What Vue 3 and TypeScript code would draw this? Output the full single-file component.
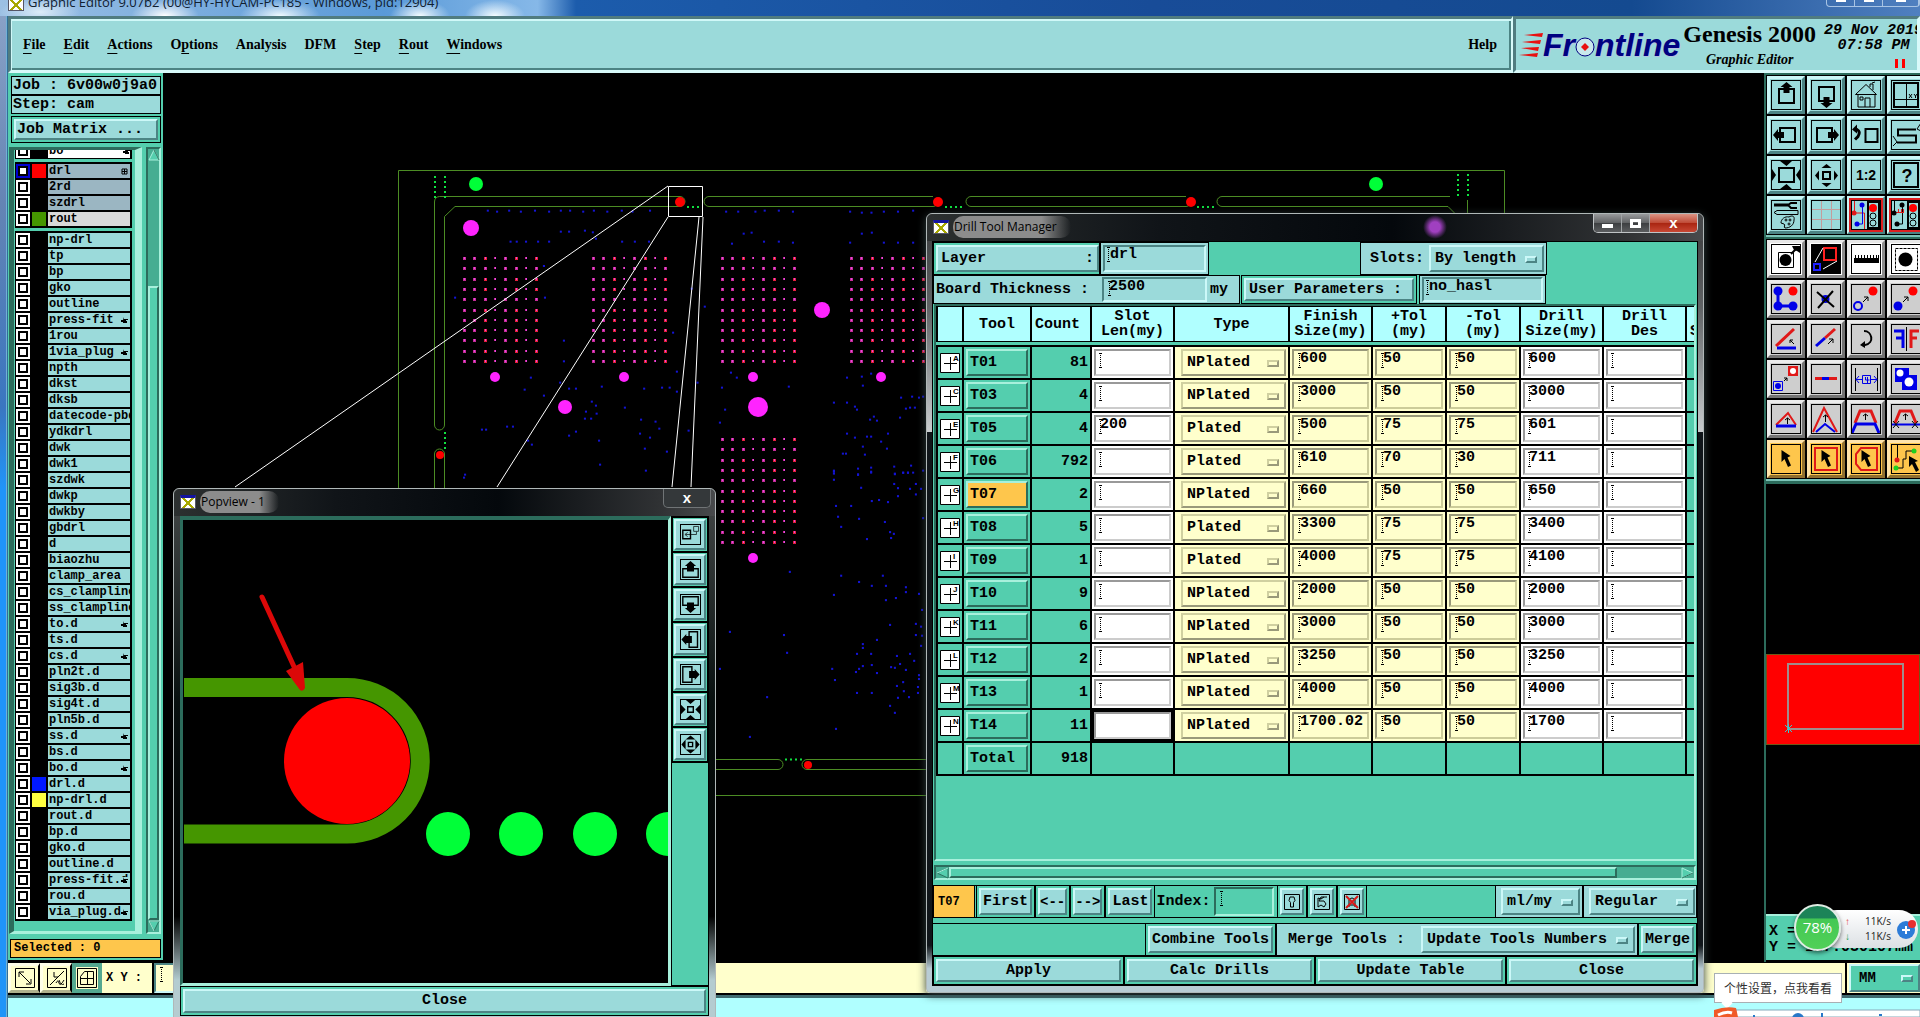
<script setup lang="ts">
import { ref } from 'vue'

interface Layer { name: string; color?: string; kind?: string; mark?: string; on?: boolean }
interface Tool { code: string; mark: string; count: number; slot: string; type: string; finish: string; plus: string; minus: string; drill: string }

const menus: { key: string; pre?: string; rest: string }[] = [
  { key: 'F', rest: 'ile' }, { key: 'E', rest: 'dit' }, { key: 'A', rest: 'ctions' },
  { pre: 'O', key: 'p', rest: 'tions' }, { key: '', rest: 'Analysis' }, { key: '', rest: 'DFM' },
  { key: 'S', rest: 'tep' }, { key: 'R', rest: 'out' }, { key: 'W', rest: 'indows' },
]

const drillLayers: Layer[] = [
  { name: 'drl', color: '#ff0000', kind: 'drill', mark: 'grid', on: true },
  { name: '2rd', kind: 'drill' },
  { name: 'szdrl', kind: 'drill' },
  { name: 'rout', color: '#459600', kind: 'rout' },
]
const handed = new Set(['press-fit', '1via_plug', 'to.d', 'cs.d', 'ss.d', 'bo.d', 'press-fit.d', 'via_plug.d'])
const swatches: Record<string, string> = { 'drl.d': '#0018ff', 'np-drl.d': '#ffff40' }
const miscLayers: Layer[] = (
  'np-drl tp bp gko outline press-fit 1rou 1via_plug npth dkst dksb datecode-pbd ydkdrl dwk dwk1 szdwk dwkp dwkby gbdrl d ' +
  'biaozhu clamp_area cs_clampline ss_clampline to.d ts.d cs.d pln2t.d sig3b.d sig4t.d pln5b.d ss.d bs.d bo.d drl.d np-drl.d ' +
  'rout.d bp.d gko.d outline.d press-fit.d rou.d via_plug.d'
).split(' ').map((name) => ({ name, color: swatches[name], mark: handed.has(name) ? 'hand' : undefined }))
const layerGroups = [drillLayers, miscLayers]

const tool = (code: string, mark: string, count: number, slot: string, type: string, finish: string, plus: string, minus: string, drill: string): Tool =>
  ({ code, mark, count, slot, type, finish, plus, minus, drill })
const tools = ref<Tool[]>([
  tool('T01', 'A', 81, '', 'NPlated', '600', '50', '50', '600'),
  tool('T03', 'C', 4, '', 'NPlated', '3000', '50', '50', '3000'),
  tool('T05', 'E', 4, '200', 'Plated', '500', '75', '75', '601'),
  tool('T06', 'F', 792, '', 'Plated', '610', '70', '30', '711'),
  tool('T07', 'G', 2, '', 'NPlated', '660', '50', '50', '650'),
  tool('T08', 'H', 5, '', 'Plated', '3300', '75', '75', '3400'),
  tool('T09', 'I', 1, '', 'Plated', '4000', '75', '75', '4100'),
  tool('T10', 'J', 9, '', 'NPlated', '2000', '50', '50', '2000'),
  tool('T11', 'K', 6, '', 'NPlated', '3000', '50', '50', '3000'),
  tool('T12', 'L', 2, '', 'NPlated', '3250', '50', '50', '3250'),
  tool('T13', 'M', 1, '', 'NPlated', '4000', '50', '50', '4000'),
  tool('T14', 'N', 11, '', 'NPlated', '1700.02', '50', '50', '1700'),
])
const current = ref('T07')
const total = 918
const columns = [28, 68, 60, 83, 115, 83, 74, 74, 83, 83, 83]

const st = (d: string, color = '#000', w = 1) => `<path d="${d}" fill="none" stroke="${color}" stroke-width="${w}"/>`
const fl = (d: string, color = '#000') => `<path d="${d}" fill="${color}"/>`
const dot = (x: number, y: number, r: number, color: string) => `<circle cx="${x}" cy="${y}" r="${r}" fill="${color}"/>`
const ring = (x: number, y: number, r: number, color: string, w = 1) => `<circle cx="${x}" cy="${y}" r="${r}" fill="none" stroke="${color}" stroke-width="${w}"/>`
const R = '#e01818'
const B = '#0000e8'
const cursor = fl('M10.500 6l9 6-3 1.500 3.500 8-3 1.500-3.500-8-3 3z')
const lights = '<rect x="17" y="2" width="11" height="26" fill="#9bdada" stroke="#000" stroke-width="2"/>' +
  dot(22, 8, 4, '#ff0000') + ring(22, 16, 3, '#000') + ring(22, 23, 3, '#000')

const viewIcons: { name: string; svg: string; cls?: string }[] = [
  { name: 'Pan up', svg: st('M8 9h15v14H8z', '#000', 2) + fl('M15.5 2l6 5h-3v6h-6V7h-3z') },
  { name: 'Pan down', svg: st('M8 7h15v14H8z', '#000', 2) + fl('M15.5 28l6-5h-3v-6h-6v6h-3z') },
  { name: 'Home', svg: st('M4.5 14.5L15 4.5 25.5 14.5z') + st('M7 14v13h17V14M14 27V18h5v9M9 17h3v3H9zM19 7V4h3v6M21 3l3-1') },
  { name: 'Coordinates view', svg: st('M3 3h24v24H3z', '#000', 2) + st('M15.5 3v24M3 19.5h24') + st('M18 14l3 4M21 14l-3 4M23 14l1.5 2L26 14M24.5 16v2') },
  { name: 'Pan left', svg: st('M9 8h15v14H9z', '#000', 2) + fl('M2 15l5-6v3h6v6H7v3z') },
  { name: 'Pan right', svg: st('M6 8h15v14H6z', '#000', 2) + fl('M28 15l-5-6v3h-6v6h6v3z') },
  { name: 'Previous view', svg: st('M14.5 9h12v13h-12z', '#000', 2) + st('M4 9.5h2q4 2 1 7l-3 3', '#000', 3) + fl('M1 9.5l5-5v9z') },
  { name: 'Serpentine', svg: st('M25 9.5H7v6h18v7H6', '#000', 2) + st('M30 3l-4 6 4 2M2 16l4 6-4 4') },
  { name: 'Zoom in', svg: st('M8 8h15v14H8z', '#000', 2) + fl('M9 1h12l-5.5 5zM9 29h12l-5.5-5zM1 9v12l4-6zM29 9v12l-4-6z') },
  { name: 'Zoom out', svg: st('M12 12h7v7h-7z', '#000', 2) + fl('M15.5 4l5 4h-10zM15.5 27l5-4h-10zM4 15.5l4-5v10zM27 15.5l-4-5v10z') },
  { name: 'Scale', svg: '<text x="15" y="20" text-anchor="middle" font-family="Liberation Sans, sans-serif" font-weight="700" font-size="14">1:2</text>' },
  { name: 'Help', svg: st('M3 3h24v24H3z', '#000', 2) + '<text x="16" y="22" text-anchor="middle" font-family="Liberation Sans, sans-serif" font-size="18">?</text>' },
  { name: 'Tools', svg: st('M3 5h14', '#000', 3) + st('M26 3h-6l-3 2 3 3h6', '#000', 2) + st('M3 12.5l3-2h21v4H6z') + st('M10 23c0-4 4-7 8-6 3-2 6-1 5 3 0 5-4 8-9 8-2-1 1-3-1-4z') + ring(15, 20, 1, '#000') + ring(19, 20, 1, '#000') + ring(18, 24, 1, '#000') },
  { name: 'Grid', svg: st('M10.5 0v30M20.5 0v30M0 9.5h30M0 19.5h30', '#c49c9c') },
  { name: 'Net highlight', cls: 'red', svg: st('M3.5 1v12h10v17', R) + st('M11.5 6v18H6', B) + dot(3, 13, 2.5, R) + dot(11, 5, 2.5, B) + dot(6, 24, 2.5, B) + lights },
  { name: 'Net select', cls: 'red', svg: st('M3.5 1v12M11.5 6v18H6') + st('M5 12.5h8M7.5 12V9M10.5 12V9M12.5 12V9', R) + dot(3, 13, 2.5, '#000') + dot(11, 5, 2.5, '#000') + dot(6, 24, 2.5, '#000') + lights },
]
const editIcons: { name: string; svg: string; cls?: string }[] = [
  { name: 'Move feature', cls: 'white', svg: st('M7.5 8.5h15v15h-15z') + dot(14.5, 16, 6, '#000') + st('M20 10l5-5', '#000', 2) + fl('M21 2h8v7l-3-2-3-1z') },
  { name: 'Window copy', cls: 'white', svg: fl('M0 0h30v30H0z') + st('M13 4h12v12H13z', '#ff2020', 2) + st('M3 20h6v6H3z', '#2020ff', 2) + st('M12 4L4 18M26 17L12 25', '#fff') },
  { name: 'Measure', cls: 'white', svg: fl('M3 14h25v5H3z') + st('M4.5 11v3M7.5 11v3M10.5 11v3M13.5 11v3M16.5 11v3M19.5 11v3M22.5 11v3M25.5 11v3M27.5 11v3') },
  { name: 'Selection frame', cls: 'white', svg: '<path d="M4.5 4.5h22v22h-22z" fill="none" stroke="#000" stroke-dasharray="3 1"/>' + dot(14.5, 15.5, 7, '#000') },
  { name: 'Connect', cls: 'gray', svg: st('M7 7v15h15', B, 3) + dot(7, 7, 4.5, B) + dot(7, 22, 4.5, B) + dot(22, 22, 4.5, B) + dot(22, 7, 4.5, '#ff0000') },
  { name: 'Delete', cls: 'gray', svg: dot(14.5, 15, 4, B) + st('M6 8l17 15M22 7L7 24', '#000', 2) },
  { name: 'Copy feature', cls: 'gray', svg: ring(7, 22, 4, B, 2) + dot(22, 7, 4.5, '#ff0000') + st('M12 18l5-5M13 13h4v4') },
  { name: 'Transfer feature', cls: 'gray', svg: dot(7, 22, 4.5, B) + dot(22, 7, 4.5, '#ff0000') + st('M12 18l5-5M13 13h4v4') },
  { name: 'Rotate', cls: 'gray', svg: st('M5 22L23 5', R, 3) + st('M6 24h19', B, 3) + st('M23 20l-4-4M19 19v-3h3') },
  { name: 'Extend', cls: 'gray', svg: st('M14 14l10-9', R, 3) + st('M5 22l9-8', B, 3) + st('M17 20l5-5M18 15h4v4') },
  { name: 'Turn', cls: 'gray', svg: st('M13 7c8 0 11 12 1 14h-3', '#000', 2) + fl('M9 21l5-4v7z') },
  { name: 'Mirror', cls: 'gray', svg: st('M3 7h9v17M5 14h7', B, 3) + st('M28 7h-8v17M20 14h6', R, 3) + st('M15.5 3v24') },
  { name: 'Replace', cls: 'gray', svg: '<rect x="17" y="2" width="10" height="10" fill="#e01818"/>' + dot(22, 7, 3, '#fff') + st('M2.5 17.5h9v9h-9z', B) + dot(7, 22, 3, B) + st('M13 17l3-3M13 14h3v3') },
  { name: 'Merge line', cls: 'gray', svg: st('M4 14.5h22', R, 3) + st('M11 14.5h7', B, 3) },
  { name: 'Gap', cls: 'gray', svg: st('M4.5 4v23M26.5 4v23') + st('M5 15.5h6M20 15.5h6M8 12l-3 3.5L8 19M23 12l3 3.5L23 19M11.5 11.5h8v8h-8zM14.5 13v3h4M16.5 13v6', B) },
  { name: 'Break', cls: 'gray', svg: fl('M4 4h14v7h8v15H11v-8H4z', B) + dot(9, 9, 3.5, '#fff') + dot(18, 18, 4.5, '#fff') },
  { name: 'Edge stretch', cls: 'gray', svg: st('M5 21L17 9l8 12', R, 2) + st('M5 22h20', B, 3) + st('M16.5 20v-6M14 16l2.5-2 2.5 2') },
  { name: 'Corner stretch', cls: 'gray', svg: st('M2 28L13 4l13 24', R, 2) + st('M5 28l9-8 10 8', B, 2) + st('M14.5 18v-7M12 13l2.5-2 2.5 2') },
  { name: 'Segment stretch', cls: 'gray', svg: st('M4 19l5-12h11l5 12', R, 3) + st('M1 29l4-9h19l4 9', B, 3) + st('M14.5 16v-6M12 12l2.5-2 2.5 2') },
  { name: 'Segment cut', cls: 'gray', svg: st('M4 19l5-12h11l5 12', R, 3) + st('M1 20.5h29', B, 2) + st('M2 17l6 7M8 17l-6 7M21 17l6 7M27 17l-6 7M14.5 16v-6M12 12l2.5-2 2.5 2') },
  { name: 'Select', cls: 'gold', svg: cursor },
  { name: 'Select in frame', cls: 'gold', svg: cursor + st('M4 4h22v22H4z', R, 2) },
  { name: 'Select in polygon', cls: 'gold', svg: cursor + st('M10 4h16v22H10l-5-6V10z', R, 2) },
  { name: 'Select net', cls: 'gold', svg: st('M6.5 0v16M6 24h6v-9h3V7h8') + dot(6, 16, 2.5, R) + dot(5, 24, 2.5, '#20d020') + dot(23, 7, 2.5, '#20d020') + fl('M18 12l9 5-3 1 4 8-3 2-4-8-3 3z') },
]
const popIcons = [
  { name: 'Attach view', svg: st('M4 9h11v12H4z', '#000', 2) + st('M19.5 3.5h7v7h-7zM23.5 11v4H8M11 12l-4 3 4 3') },
  { name: 'Up', svg: st('M4 14h22v12H4z', '#000', 2) + fl('M15 3l8 7h-3v8H10v-8H7z') },
  { name: 'Down', svg: st('M4 4h22v12H4z', '#000', 2) + fl('M15 27l8-7h-3v-8H10v8H7z') },
  { name: 'Left', svg: st('M13 4h12v22H13z', '#000', 2) + fl('M2 15l7-8v3h8v10H9v3z') },
  { name: 'Right', svg: st('M4 4h13v22H4z', '#000', 2) + fl('M28 15l-7-8v3h-8v10h8v3z') },
  { name: 'Shrink', svg: st('M11 11h8v8h-8z', '#000', 2) + fl('M8 1h14l-7 6zM8 29h14l-7-6zM1 8v14l7-7zM29 8v14l-7-7z') },
  { name: 'Grow', svg: st('M12 12h6v6h-6z', '#000', 2) + fl('M15 2l7 6H8zM15 28l7-6H8zM2 15l6-7v14zM28 15l-6-7v14z') },
]

/* Pad clusters on the board: origin of each grid, 8 wide and 11 high */
const padGrids = [{ x: 464, y: 258 }, { x: 593, y: 258 }, { x: 722, y: 258 }, { x: 851, y: 258 }, { x: 722, y: 439 }]
const pads = padGrids.flatMap((g) =>
  Array.from({ length: 88 }, (_, i) => {
    const c = i % 8
    const r = Math.floor(i / 8)
    return { x: g.x + Math.round(c * 10.3), y: g.y + Math.round(r * 10.3), hot: [2, 5, 7].includes(c) && r !== 1 && r !== 4, wide: c !== 3 && c !== 6 }
  }),
)
const slotPads = [[471, 228, 8], [822, 310, 8], [495, 377, 5], [624, 377, 5], [753, 377, 5], [881, 377, 5], [565, 407, 7], [758, 407, 10], [753, 558, 5]]

const toPairs = (s: string) => s.split(' ').map((p) => p.split(',').map(Number))
/* Via positions, stored in thirds of a pixel */
const viasUpper = toPairs(
  '284,152 311,155 346,152 380,155 421,152 462,155 496,152 523,152 561,155 592,152 631,155 673,152 704,155 755,152 976,155 1011,155 1061,155 1088,152 1129,152 1170,155 1336,155 1370,158 1398,158 1434,155 1475,155 1519,152 ' +
  '496,215 520,215 566,212 589,217 598,236 350,245 368,245 395,245 430,245 462,245 674,245 711,245 752,245 1027,221 1050,218 993,251 1086,245 1129,245 1170,248 1370,221 1399,218 1336,248 1434,248 1475,248 1519,248 ' +
  '447,318 189,413 450,413 876,386 914,440 822,518 505,542 505,604 409,653 391,689 447,707 494,668 520,686 540,686 615,680 738,686 790,683 812,683 833,635 833,695 893,668 990,638 1007,653 964,683 1158,680 ' +
  '1327,653 1370,650 1397,641 1373,677 586,725 598,737 569,755 600,761 566,776 584,776 682,743 729,779 771,785 782,806 867,812 726,821 755,833 740,866 804,875 607,842 610,914 743,932 540,815 520,827 ' +
  '267,809 279,809 340,800 357,800 401,842 412,854 218,944 215,953 973,749 958,788 1289,728 1327,728 1350,740 1356,749 1484,713 1516,710 1536,713 1548,710 1498,746 1510,743 1524,743 1481,773 1394,779 1405,770 1414,782 ' +
  '1327,821 1350,833 1385,830 1397,830 1446,821 1426,845 1373,860 1443,866 1315,881 1324,881 1379,884 1289,932 1289,941 1359,926 1359,943 1397,923 1397,938 1464,920 1466,941 1513,917 1490,938 1504,938 1519,938 1548,932')
const viasLower = toPairs(
  '1289,5 1289,28 1397,5 1359,14 1368,51 1466,12 1464,40 1475,52 1475,75 1490,8 1504,8 1510,54 1527,40 1527,70 1542,54 1295,103 1339,103 1399,89 1420,86 1446,92 1301,134 1362,140 1310,163 1437,149 1385,198 1452,178 1463,183 1455,195 1548,138 ' +
  '1161,292 1310,303 1362,321 1431,303 1440,332 1399,332 1289,358 1498,336 1498,350 1536,355 1469,367 1440,373 1545,401 1452,444 1414,487 1373,499 1373,510 1356,527 1397,527 1472,533 1510,527 1527,441 1542,449 1527,473 1545,475 1542,504 ' +
  '987,464 1144,473 1153,524 958,570 1095,651 1045,765 1295,742 1284,570 1292,602 1353,579 1362,570 1373,562 1399,559 1414,582 1455,565 1466,567 1481,556 1498,573 1522,547 1536,588 1536,599 1490,608 1472,619 1356,639 1399,639 1492,634 1507,651 1475,653 1533,622 1533,639 1452,676 1466,696')
</script>

<template>
  <div class="desktop">
    <header class="caption">
      <span class="x-icon"></span>
      <span class="caption-text">Graphic Editor 9.07b2 (00@HY-HYCAM-PC185 - Windows, pid:12904)</span>
      <span class="caption-buttons"><i></i><i></i><i></i></span>
    </header>

    <div class="top">
      <nav class="menubar">
        <a v-for="m in menus" :key="m.key + m.rest" href="#">{{ m.pre }}<u v-if="m.key">{{ m.key }}</u>{{ m.rest }}</a>
        <a href="#" class="help">Help</a>
      </nav>
      <div class="brand">
        <div class="logo" aria-label="Frontline">
          <svg width="24" height="26" viewBox="0 0 24 26" fill="#e81010"><path d="M5 3L24 1l-1 4zM3 10l19-2-1 4zM2 16l18-1-1 4zM0 23l19-2-1 4z" /></svg>
          <span>Fr</span>
          <svg class="target" width="20" height="20" viewBox="0 0 20 20"><circle cx="10" cy="10" r="9" fill="#c8e8ec" stroke="#000080" stroke-width="1" /><path d="M10 6l4 4-4 4-4-4z" fill="#e81010" /></svg>
          <span>ntline</span>
        </div>
        <div class="product"><strong>Genesis 2000</strong><em>Graphic Editor</em></div>
        <div class="clock"><span>29 Nov 2019</span><span>07:58 PM</span><b class="pause"></b></div>
      </div>
    </div>

    <main class="work">
      <aside class="side">
        <div class="info">Job : 6v00w0j9a0</div>
        <div class="info">Step: cam</div>
        <div class="matrix"><button class="btn">Job Matrix ...</button></div>
        <div class="layers">
          <div class="list">
            <div class="peek">
              <div class="layer plain">
                <input type="checkbox" aria-label="bo" /><i class="swatch"></i>
                <span class="lname">bo</span>
                <svg class="mark" width="7" height="7" viewBox="0 0 7 7"><path d="M3 0v2h4v1H5v1h1v2H2V5H0V3h2z" /></svg>
              </div>
            </div>
            <div v-for="(group, gi) in layerGroups" :key="gi" class="group">
              <div v-for="l in group" :key="l.name" class="layer" :class="l.kind">
                <input type="checkbox" :class="{ on: l.on }" :aria-label="l.name" />
                <i class="swatch" :style="{ background: l.color }"></i>
                <span class="lname">{{ l.name }}</span>
                <svg v-if="l.mark === 'hand'" class="mark hand" width="7" height="7" viewBox="0 0 7 7"><path d="M3 0v2h4v1H5v1h1v2H2V5H0V3h2z" /></svg>
                <svg v-else-if="l.mark" class="mark" width="7" height="7" viewBox="0 0 7 7"><path d="M1 1h5v5H1zM3.5 1v5M1 3.5h5" fill="none" stroke="#000" /></svg>
              </div>
            </div>
          </div>
          <div class="vscroll">
            <svg width="12" height="12" viewBox="0 0 12 12"><path d="M6 1l5 10H1z" fill="#54ceae" stroke="#a8f0dc" /><path d="M6 1l5 10" fill="none" stroke="#2a7460" /></svg>
            <i class="trough"></i><i class="thumb"></i>
            <svg width="12" height="12" viewBox="0 0 12 12"><path d="M1 1h10L6 11z" fill="#54ceae" stroke="#2a7460" /><path d="M11 1H1l5 10" fill="none" stroke="#a8f0dc" /></svg>
          </div>
        </div>
        <div class="selected">Selected : 0</div>
      </aside>

      <section class="board">
        <svg width="100%" height="100%" fill="none">
          <g transform="translate(-163 -73)">
            <g stroke="#4c8c24">
              <path d="M398.5 795.5V170.500H1504.500V795.500z" />
              <path d="M434.500 425V202q0-5 5-5.500H680a5 5 0 0 1 0 10H455l-10.500 10V425a5 5 0 0 1-10 0zM434.500 520V454a5 5 0 0 1 10 0V520" />
              <path d="M933 196.500H709a5 5 0 0 0 0 10H933a5 5 0 0 0 5-5M1186 196.500H971a5 5 0 0 0 0 10H1186a5 5 0 0 0 5-5M1450 196.500H1222a5 5 0 0 0 0 10H1448l10 10M1467.500 200V260" />
              <path d="M700 759.500H778a5 5 0 0 1 0 10H700M940 759.500H807a5 5 0 0 0 0 10H940" />
            </g>
            <path stroke="#10e040" stroke-width="2" stroke-dasharray="2 3" d="M435 176V198M445 176V198M1458 174V198M1468 174V198M687 207H703M945 207H963M1197 207H1215M445 432V449M785 759.500H802" />
            <circle cx="476" cy="184" r="7" fill="#00ff38" /><circle cx="1376" cy="184" r="7" fill="#00ff38" />
            <g fill="#ff24ff"><circle v-for="(s, i) in slotPads" :key="i" :cx="s[0]" :cy="s[1]" :r="s[2]" /></g>
            <g shape-rendering="crispEdges">
              <g v-for="(p, i) in pads" :key="i">
                <rect :x="p.x - 1" :y="p.y - 1" :width="p.wide ? 3 : 2" :height="p.wide ? 3 : 2" :fill="p.hot ? '#e4203c' : '#c42c98'" />
                <rect :x="p.x" :y="p.y - 1" width="1" height="2" fill="#e848e0" />
              </g>
            </g>
            <g transform="translate(390 160) scale(.3444 .3333)" fill="#1414d4"><rect v-for="(v, i) in viasUpper" :key="i" :x="v[0] - 3" :y="v[1] - 3" width="6" height="6" /></g>
            <g transform="translate(390 470) scale(.3444 .3489)" fill="#1414d4"><rect v-for="(v, i) in viasLower" :key="i" :x="v[0] - 3" :y="v[1] - 3" width="6" height="6" /></g>
            <g fill="#f00"><circle cx="680" cy="202" r="5" /><circle cx="938" cy="202" r="5" /><circle cx="1191" cy="202" r="5" /><circle cx="440" cy="455" r="4" /><circle cx="808" cy="765" r="4" /></g>
            <path stroke="#fff" d="M668.500 186.500h34v30h-34zM668 186L235 487M668 217L497 487M699 217L672 487M703 217L691 487" />
          </g>
        </svg>
      </section>

      <aside class="tools">
        <div class="palette"><button v-for="t in viewIcons" :key="t.name" :class="t.cls" :aria-label="t.name"><svg width="30" height="30" viewBox="0 0 30 30" v-html="t.svg"></svg></button></div>
        <div class="palette"><button v-for="t in editIcons" :key="t.name" :class="t.cls" :aria-label="t.name"><svg width="30" height="30" viewBox="0 0 30 30" v-html="t.svg"></svg></button></div>
        <div class="overview">
          <div class="extent">
            <svg width="100%" height="90"><rect x="21" y="9" width="115" height="65" fill="none" stroke="#a08c8c" stroke-width="2" /><path d="M18 70l7 7M25 70l-7 7M21.500 69v9" stroke="#30d0d0" /></svg>
          </div>
        </div>
        <div class="coords"><span>X =</span><span>Y = 127.030107mm</span></div>
      </aside>
    </main>

    <footer class="foot">
      <div class="snaps">
        <button aria-label="Snap"><svg width="20" height="20" viewBox="0 0 20 20" fill="none" stroke="#000"><path d="M.5.5h19v19H.5zM4 4l11 11M4 9V4h5M16 11v5h-5" /></svg></button>
        <button aria-label="Units"><svg width="20" height="20" viewBox="0 0 20 20" fill="none" stroke="#000"><path d="M.5.5h19v19H.5zM3 17L17 3M7 4v5h4M9 15q2-4 3 0t5-3M12 12q2 6 5 4" /></svg></button>
        <button class="on" aria-label="Grid"><svg width="20" height="20" viewBox="0 0 20 20" fill="none" stroke="#000"><path d="M.5.5h19v19H.5zM3.500 16.500v-8l4-5h9v13zM10.500 3v13M3 10.500h13" /></svg></button>
        <label for="xy">X Y :</label>
        <span class="beam xy"><input id="xy" type="text" /></span>
      </div>
      <span class="menu-select mm"><select aria-label="Units"><option>MM</option></select></span>
    </footer>
    <div class="status"></div>

    <section class="win pop">
      <div class="win-title"><span class="x-icon"></span><span class="glow">Popview - 1</span><button class="wx" aria-label="Close window">x</button></div>
      <div class="pop-body">
        <div class="pop-view">
          <svg width="485" height="463" viewBox="183 519 485 463">
            <path d="M184 686.500H347a73 73 0 0 1 0 146.500H184" fill="none" stroke="#459600" stroke-width="19" />
            <circle cx="347" cy="760" r="63" fill="#f00" />
            <g fill="#00ff38"><circle cx="448" cy="833" r="22" /><circle cx="521" cy="833" r="22" /><circle cx="595" cy="833" r="22" /><circle cx="668" cy="833" r="22" /></g>
            <path d="M262 596L296 670" stroke="#dc0808" stroke-width="5" stroke-linecap="round" /><path d="M286 670l17-9 2 26q-2 4-5 2z" fill="#dc0808" />
          </svg>
        </div>
        <div class="pop-tools"><button v-for="t in popIcons" :key="t.name" :aria-label="t.name"><svg width="21" height="21" viewBox="0 0 30 30" v-html="t.svg"></svg></button></div>
      </div>
      <div class="pop-foot"><button class="btn">Close</button></div>
    </section>

    <section class="win drill">
      <div class="win-title">
        <span class="x-icon"></span><span class="glow">Drill Tool Manager</span>
        <span class="ghost"></span>
        <span class="win-buttons"><button aria-label="Minimize"><i class="min"></i></button><button aria-label="Maximize"><i class="max"></i></button><button class="danger" aria-label="Close window">x</button></span>
      </div>
      <div class="client">
        <div class="params first">
          <span class="cell green layer-key"><button class="btn">Layer &nbsp; &nbsp; &nbsp; &nbsp; &nbsp; :</button></span>
          <span class="cell layer-val beam"><input type="text" value="drl" aria-label="Layer" /></span>
          <span class="grow"></span>
          <span class="cell slots"><label for="slots">Slots:</label><span class="menu-select"><select id="slots"><option>By length</option></select></span></span>
        </div>
        <div class="params">
          <span class="cell thick"><label for="thick">Board Thickness :</label><span class="beam"><input id="thick" type="text" value="2500" /></span><span>my</span></span>
          <span class="cell green user"><button class="btn">User Parameters :</button></span>
          <span class="cell hasl beam"><input type="text" value="no_hasl" aria-label="User parameters" /></span>
        </div>

        <div class="sheet">
          <table>
            <colgroup><col v-for="(w, i) in columns" :key="i" :style="{ width: w + 'px' }" /></colgroup>
            <thead>
              <tr>
                <th></th><th>Tool</th><th class="cut">Count</th><th>Slot<br />Len(my)</th><th>Type</th><th>Finish<br />Size(my)</th>
                <th>+Tol<br />(my)</th><th>-Tol<br />(my)</th><th>Drill<br />Size(my)</th><th>Drill<br />Des</th><th class="cut"><br />S</th>
              </tr>
            </thead>
            <tbody>
              <tr v-for="t in tools" :key="t.code">
                <td><svg class="sym" width="20" height="20" viewBox="0 0 20 20"><path d="M.5.5h19v19H.5z" fill="#fff" stroke="#000" /><path d="M4 10.500h13M10.500 4v13" stroke="#000" /><text x="13" y="8" font-size="8" font-family="Liberation Sans, sans-serif">{{ t.mark }}</text></svg></td>
                <td><button class="tool" :class="{ current: t.code === current }" @click="current = t.code">{{ t.code }}</button></td>
                <td class="num">{{ t.count }}</td>
                <td class="w" :class="{ focus: t.code === 'T14' }"><span :class="{ beam: t.code !== 'T14' }"><input v-model="t.slot" type="text" :aria-label="t.code + ' slot length'" /></span></td>
                <td class="c"><span class="menu-select"><select v-model="t.type" :aria-label="t.code + ' type'"><option>NPlated</option><option>Plated</option></select></span></td>
                <td class="c"><span class="beam"><input v-model="t.finish" type="text" :aria-label="t.code + ' finish size'" /></span></td>
                <td class="c"><span class="beam"><input v-model="t.plus" type="text" :aria-label="t.code + ' plus tolerance'" /></span></td>
                <td class="c"><span class="beam"><input v-model="t.minus" type="text" :aria-label="t.code + ' minus tolerance'" /></span></td>
                <td class="w"><span class="beam"><input v-model="t.drill" type="text" :aria-label="t.code + ' drill size'" /></span></td>
                <td class="w"><span class="beam"><input type="text" :aria-label="t.code + ' drill designator'" /></span></td>
                <td></td>
              </tr>
              <tr class="total"><td></td><td><button class="tool">Total</button></td><td class="num">{{ total }}</td><td v-for="n in 8" :key="n"></td></tr>
            </tbody>
          </table>
        </div>
        <div class="hscroll">
          <svg width="13" height="12" viewBox="0 0 13 12"><path d="M1 6l11-5v10z" fill="#54ceae" stroke="#2a7460" /><path d="M12 1L1 6" stroke="#a8f0dc" /></svg>
          <i class="thumb"></i><i class="trough"></i>
          <svg width="13" height="12" viewBox="0 0 13 12"><path d="M1 1l11 5-11 5z" fill="#54ceae" stroke="#a8f0dc" /><path d="M12 6L1 11" stroke="#2a7460" /></svg>
        </div>

        <div class="nav">
          <span class="cell badge">{{ current }}</span>
          <span class="cell green"><button class="btn">First</button></span><span class="cell green"><button class="btn arrow">&lt;--</button></span><span class="cell green"><button class="btn arrow">--&gt;</button></span><span class="cell green"><button class="btn">Last</button></span>
          <label for="index">Index:</label><span class="beam index"><input id="index" type="text" /></span>
          <span class="cell green"><button class="btn" aria-label="Hint"><svg width="16" height="16" viewBox="0 0 16 16" fill="none" stroke="#000"><path d="M.5.5h15v15H.5zM6.500 10V8.500L5 6.500 6 3h4l1 3.500-1.500 2V13h-3z" /></svg></button></span>
          <span class="cell green"><button class="btn" aria-label="Path"><svg width="16" height="16" viewBox="0 0 16 16" fill="none" stroke="#000"><path d="M.5.5h15v15H.5zM13 3H7l-2 4h5l2 3-2 3-3-2-3 2V4l3 1 3-2" /></svg></button></span>
          <span class="cell green"><button class="btn" aria-label="Clear"><svg width="16" height="16" viewBox="0 0 16 16" fill="none" stroke="#000"><path d="M.5.5h15v15H.5zM5 13V6q3-4 6 0v7M5 11h6" /><path d="M2 2l12 12M14 2L2 14" stroke="#d81818" stroke-width="2" /></svg></button></span>
          <span class="grow"></span>
          <span class="cell unit"><span class="menu-select"><select aria-label="Unit system"><option>ml/my</option></select></span></span>
          <span class="cell mode"><span class="menu-select"><select aria-label="Mode"><option>Regular</option></select></span></span>
        </div>
        <div class="nav merge">
          <span class="grow"></span>
          <span class="cell green combine"><button class="btn">Combine Tools</button></span>
          <span class="cell mtools"><label for="mt">Merge Tools :</label><span class="menu-select"><select id="mt"><option>Update Tools Numbers</option></select></span></span>
          <span class="cell green"><button class="btn">Merge</button></span>
        </div>
        <div class="actions"><span v-for="a in ['Apply', 'Calc Drills', 'Update Table', 'Close']" :key="a" class="cell green"><button class="btn">{{ a }}</button></span></div>
      </div>
    </section>

    <div class="net">
      <div class="pill">
        <div class="rates"><span><b class="up">↑</b>11K/s</span><span><b class="down">↓</b>11K/s</span></div>
        <svg width="22" height="22" viewBox="0 0 22 22"><circle cx="10" cy="12" r="9" fill="#2c7cd8" /><path d="M10 8v8M6 12h8" stroke="#fff" stroke-width="2" /><circle cx="16" cy="6" r="4" fill="#e83030" /></svg>
      </div>
      <div class="ball">78%</div>
    </div>
    <div class="tip">个性设置，点我看看</div>
    <div class="ime"><svg width="206" height="10" viewBox="0 0 206 10"><path d="M22 3H206V10H22z" fill="#fff" stroke="#8ab" /><path d="M0 3q12-4 22-2l2 9H0z" fill="#f05a28" /><path d="M4 8q8-4 14-2" stroke="#fff" stroke-width="3" fill="none" /><circle cx="84" cy="12" r="6" fill="#2878c8" /><path d="M108 6v4M40 8v2M165 8h3" stroke="#2878c8" stroke-width="2" /></svg></div>
  </div>
</template>

<style>
body { margin: 0; overflow: hidden; background: #000; }
</style>

<style scoped>
*, *::before, *::after { box-sizing: border-box; }
.desktop {
  position: relative; display: flex; flex-direction: column; width: 100%; height: 100vh; overflow: hidden; color: #000;
  padding-left: 8px; font: bold 15px/18px "Liberation Mono", monospace;
  background: linear-gradient(90deg, transparent 6px, #8fd4f4 6px, #134a78 8px, transparent 8px), linear-gradient(#8ca4c8, #6484b4 20%, #3a76c0 40%, #2094f8 48%, #2094f8);
}
button, input, select { font: inherit; color: inherit; margin: 0; padding: 0; border-radius: 0; outline: 0; appearance: none; }
i { display: block; flex: none; }
svg { display: block; flex: none; }

.btn, .menu-select { background: #9bdada; border: 2px solid; border-color: #ccf8f8 #4c8484 #4c8484 #ccf8f8; }
.btn { padding: 0 3px; white-space: pre; text-align: left; }
.menu-select { position: relative; display: flex; }
.menu-select select { flex: 1; min-width: 0; border: 0; background: none; padding-left: 4px; }
.menu-select::after {
  content: ""; position: absolute; right: 5px; top: 50%; width: 12px; height: 7px; margin-top: -3px;
  border: 2px solid; border-color: #ccf8f8 #4c8484 #4c8484 #ccf8f8; pointer-events: none;
}
.beam { position: relative; display: flex; }
.beam input { flex: 1; }
.beam::before {
  content: ""; position: absolute; left: 6px; top: 4px; width: 3px; height: 15px;
  background: repeating-linear-gradient(#000 0 1px, transparent 1px 2px) 1px 0 / 1px 100% no-repeat, linear-gradient(#000, #000) 0 0 / 3px 1px no-repeat, linear-gradient(#000, #000) 0 100% / 3px 1px no-repeat;
}
input[type="text"] { width: 100%; min-width: 0; background: none; border: 2px solid; border-color: #4c8484 #ccf8f8 #ccf8f8 #4c8484; padding-left: 5px; }

.caption {
  display: flex; align-items: center; flex: none; height: 16px; margin-left: -8px; padding-left: 8px; overflow: hidden;
  background: radial-gradient(ellipse 40px 14px at 40px 12px, #dcecf8, transparent), radial-gradient(ellipse 34px 16px at 165px 16px, #fff, transparent), radial-gradient(ellipse 40px 16px at 280px 16px, #f0faff, transparent), radial-gradient(ellipse 30px 16px at 420px 16px, #f4fcff, transparent), radial-gradient(ellipse 30px 16px at 495px 16px, #f4fcff, transparent), linear-gradient(90deg, #9cc0e4, #5a9ad8 20%, #86b8e8 28%, #1c5cac 30%, #184c98 60%, #144a90 85%, #5080c0);
}
.x-icon { flex: none; width: 16px; height: 14px; border: 1px solid #556; border-top: 3px solid #1414a0; background: linear-gradient(45deg, transparent 43%, #a8a800 43% 57%, transparent 57%), linear-gradient(-45deg, #fff 43%, #a8a800 43% 57%, #fff 57%); }
.caption .x-icon { margin-top: -8px; }
.caption-text { margin: -13px 0 0 4px; font: 13px/16px "Open Sans", sans-serif; color: #102030; white-space: nowrap; }
.caption-buttons { display: flex; align-self: flex-start; margin-left: auto; height: 7px; border: 1px solid #a8c4e4; border-top: 0; border-radius: 0 0 4px 4px; }
.caption-buttons i { width: 28px; border-right: 1px solid #a8c4e4; background: linear-gradient(#fff, #fff) 50% 0 / 10px 2px no-repeat; }
.caption-buttons i:last-child { width: 36px; }

.top { display: flex; flex: none; height: 57px; }
.menubar, .brand { border: 3px solid; border-color: #507c80 #d8fafa #d8fafa #507c80; background: #9bdada; }
.menubar { display: flex; align-items: center; gap: 18px; flex: 1; padding: 0 14px 0 12px; border-right-width: 2px; box-shadow: inset 1px 2px #d0f8f8, inset -2px -2px #4c8484; font: bold 14px/20px "Liberation Serif", serif; }
.menubar a { color: #000; text-decoration: none; }
.menubar u { text-underline-offset: 4px; }
.menubar .help { margin-left: auto; }
.brand { display: flex; width: 407px; overflow: hidden; }
.logo { display: flex; align-items: center; margin-left: 3px; height: 51px; color: #000080; font: italic bold 32px/40px "Liberation Sans", sans-serif; text-shadow: 1px 1px #b8c0e0; }
.logo .target { margin: 5px 0 0; }
.product { display: flex; flex-direction: column; align-items: center; width: 136px; margin-left: 3px; white-space: nowrap; }
.product strong { font: bold 24px/30px "Liberation Serif", serif; }
.product em { font: italic bold 14px/22px "Liberation Serif", serif; }
.clock { display: flex; flex-direction: column; align-items: center; font-style: italic; line-height: 15px; padding: 4px 0 0 8px; white-space: nowrap; }
.pause { width: 10px; height: 9px; margin: 6px 0 0 52px; border: solid #f00; border-width: 0 3px; }

.work { display: flex; flex: 1; min-height: 0; background: #000; }
.side { display: flex; flex-direction: column; flex: none; width: 155px; margin-bottom: 2px; padding: 3px 2px 2px 1px; background: #54ceae; }
.info { flex: none; height: 19px; margin-left: 2px; padding-left: 1px; border: 1px solid #000; background: #9bdada; white-space: nowrap; overflow: hidden; }
.matrix { flex: none; display: flex; height: 27px; margin: 2px 0 4px 2px; padding: 2px; border: 1px solid #000; }
.matrix .btn { flex: 1; padding: 0 1px; }
.layers { display: flex; gap: 4px; flex: 1; min-height: 0; }
.list { flex: 1; min-width: 0; border: solid; border-width: 3px 7px 3px 5px; border-color: #2c6c5c #a8f0dc #a8f0dc #2c6c5c; padding: 0 3px 0 1px; overflow: hidden; }
.peek { display: flex; flex-direction: column; justify-content: flex-end; height: 9px; margin-bottom: 3px; overflow: hidden; }
.group { margin-bottom: 3px; padding: 1px 2px 1px 1px; background: #000; }
.layer { display: flex; align-items: center; flex: none; height: 16px; background: #000; position: relative; font-size: 12px; line-height: 14px; }
.peek .layer { padding: 0 2px 0 1px; }
.layer input { flex: none; width: 14px; height: 14px; border: 2px solid #fff; background: linear-gradient(#fff, #fff) center / 6px 6px no-repeat #000; }
.layer input.on { border-color: #0000d0; }
.swatch { width: 14px; height: 14px; margin: 0 2px; }
.lname { flex: 1; min-width: 0; height: 14px; padding-left: 1px; background: #9bdada; overflow: hidden; white-space: nowrap; }
.plain .lname { background: #fff; }
.drill .lname { background: #9bb6c2; }
.rout .lname { background: #d9d9d9; }
.mark { position: absolute; right: 2px; top: 5px; }
.hand { background: #9bdada; }
.vscroll { display: flex; flex-direction: column; align-items: center; flex: none; width: 15px; border: 2px solid; border-color: #2c6c5c #a8f0dc #a8f0dc #2c6c5c; background: #46ad92; }
.vscroll .trough { height: 125px; }
.vscroll .thumb { flex: 1; width: 100%; background: #54ceae; border: 2px solid; border-color: #a8f0dc #2c6c5c #2c6c5c #a8f0dc; }
.selected { flex: none; height: 19px; margin: 5px 0 0 1px; padding-left: 3px; border: 1px solid #000; background: #fec64c; font-size: 12px; line-height: 17px; }
.board { flex: 1; min-width: 0; overflow: hidden; }

.tools { display: flex; flex-direction: column; flex: none; width: 156px; overflow: hidden; border-left: 2px solid #2c6c5c; background: #000; }
.palette { display: grid; grid-template-columns: repeat(4, 38px); gap: 2px; padding: 1px; border-top: 2px solid #2c6c5c; border-bottom: 2px solid #7cc4b8; width: 164px; }
.palette button { display: grid; place-items: center; height: 38px; border: 3px solid; border-color: #ccf8f8 #4c8484 #4c8484 #ccf8f8; background: #9bdada; }
.palette svg { outline: 1px solid #000; outline-offset: -1px; overflow: hidden; }
.palette .red { border-width: 2px; box-shadow: inset 0 0 0 2px #e02020; }
.palette .white { background: #fff; border-color: #e8e8e8 #8c8c8c #8c8c8c #e8e8e8; }
.palette .gray { background: #cecece; border-color: #ececec #747474 #747474 #ececec; }
.palette .gold { background: #fec64c; border-color: #fee4ac #907030 #907030 #fee4ac; }
.overview { display: flex; flex: 1; align-items: center; border-top: 3px solid #2c6c5c; }
.extent { flex: 1; height: 91px; border: 1px solid #705818; background: #f00; }
.coords { display: flex; flex-direction: column; height: 46px; margin-bottom: 2px; padding: 8px 0 0 3px; border-top: 2px solid #a8f0dc; background: #54ceae; line-height: 16px; white-space: nowrap; }

.foot { display: flex; flex: none; height: 33px; border: solid #000; border-width: 1px 0 2px; background: #ffffcc; }
.snaps { display: flex; flex: 1; align-items: center; border-right: 2px solid #000; }
.snaps button { display: grid; place-items: center; width: 32px; height: 30px; border: 3px solid; border-color: #ffffe8 #b0b08c #b0b08c #ffffe8; border-right: 2px solid #000; background: #ffffcc; }
.snaps button.on { width: 30px; border: 4px solid #54a890; }
.snaps label { padding: 0 8px 0 4px; width: 50px; font-size: 12px; white-space: nowrap; }
.xy { width: 300px; height: 30px; border-left: 2px solid #000; }
.mm { width: 71px; background: #54ceae; margin: 1px 0 1px 2px; font-size: 14px; }
.menu-select.mm select { padding-left: 8px; }
.status { flex: none; height: 22px; border-top: 3px solid #406c70; background: #b0ffff; }

.win { position: absolute; display: flex; flex-direction: column; border: 1px solid #b0b8b8; border-radius: 6px 6px 4px 4px; }
.win-title { display: flex; align-items: center; flex: none; height: 27px; padding: 0 0 2px 6px; gap: 4px; border-radius: 6px 6px 0 0; background: linear-gradient(90deg, #2c3030, #101418 30%, #04080c 60%, #303234 90%, #484a4c); }
.glow { padding: 0 14px 0 1px; font: 12px/22px "Open Sans", sans-serif; color: #000; background: linear-gradient(90deg, #8c8c8c 75%, transparent); border-radius: 10px; white-space: nowrap; }
.pop { left: 173px; top: 488px; width: 543px; height: 536px; padding: 0 6px; background: linear-gradient(#444848, #08100f 40%, #000 80%, #b4ccd0 92%); }
.pop .win-title { margin: 0 -6px; }
.wx { align-self: flex-start; width: 48px; height: 19px; margin: 0 4px 0 auto; border: 1px solid #707476; border-top: 0; border-radius: 0 0 5px 5px; background: #34383a; color: #fff; font: bold 15px/14px "Liberation Sans", sans-serif; }
.pop-body { display: flex; height: 470px; background: #000; }
.pop-view { width: 491px; flex: none; border: 3px solid; border-color: #2c6c5c #a8f0dc #a8f0dc #2c6c5c; border-top-width: 4px; overflow: hidden; }
.pop-tools { display: flex; flex-direction: column; gap: 2px; flex: 1; padding: 1px; border: 1px solid #000; background: linear-gradient(#000 246px, #54ceae 246px); }
.pop-tools button { display: grid; place-items: center; height: 33px; border: 3px solid; border-color: #ccf8f8 #4c8484 #4c8484 #ccf8f8; background: #9bdada; outline: 1px solid #54ceae; outline-offset: -1px; }
.pop-tools svg { outline: 1px solid #000; outline-offset: -1px; }
.pop-foot { display: flex; height: 30px; padding: 2px; border: 1px solid #000; background: #54ceae; }
.pop-foot .btn { flex: 1; text-align: center; }

.drill.win { left: 926px; top: 213px; width: 778px; height: 780px; padding: 0 5px 6px; background: linear-gradient(#38393a, #606466 12%, #c8ccce 28%, #10161a 28%, #10161a 94%, #b8ccd4 97%); box-shadow: 0 2px 8px #304040; }
.drill .win-title { margin: 0 -5px; }
.ghost { width: 24px; height: 24px; margin-left: auto; margin-right: 142px; border-radius: 50%; background: radial-gradient(#a040c0 30%, transparent 70%); }
.win-buttons { display: flex; align-self: flex-start; height: 19px; margin-right: 5px; border: 1px solid #c0c4c6; border-top: 0; border-radius: 0 0 5px 5px; overflow: hidden; }
.win-buttons button { display: grid; place-items: center; width: 28px; border: 0; border-right: 1px solid #a0a4a6; background: linear-gradient(#989a9c, #606264 50%, #3c3e40 50%, #5c5e60); }
.win-buttons .danger { width: 47px; border: 0; background: linear-gradient(#dc9484, #c04c38 48%, #a82410 50%, #c84834); color: #fff; font: bold 15px/14px "Liberation Sans", sans-serif; }
.min { width: 11px; height: 4px; margin-top: 6px; background: #fff; }
.max { width: 11px; height: 9px; border: 3px solid #fff; }
.client { display: flex; flex-direction: column; flex: 1; min-height: 0; background: #54ceae; border: 1px solid #000; }
.cell { display: flex; align-items: center; flex: none; border: 1px solid #000; background: #9bdada; white-space: pre; }
.cell.green { padding: 2px; background: #54ceae; }
.cell.green .btn { align-self: stretch; flex: 1; }
.grow { flex: 1; }
.params { display: flex; flex: none; height: 29px; }
.params.first { height: 33px; }
.layer-key { width: 167px; }
.layer-val { width: 109px; padding: 2px; align-items: stretch; }
.params.first .grow { max-width: 151px; }
.slots { width: 187px; justify-content: space-between; padding: 2px 2px 2px 9px; }
.slots .menu-select { width: 115px; align-self: stretch; }
.thick { width: 307px; padding: 1px 2px; gap: 3px; }
.thick .beam { width: 105px; align-self: stretch; margin-left: 10px; }
.user { width: 176px; margin: 0 2px 0 1px; }
.hasl { width: 127px; padding: 1px 2px; align-items: stretch; }
.params .beam input { padding-bottom: 5px; }
.first .beam input[type="text"] { padding-bottom: 8px; }

.sheet { flex: 1; min-height: 0; margin: 0 1px; overflow: hidden; border: 2px solid; border-color: #2c6c5c #a8f0dc #a8f0dc #2c6c5c; }
table { table-layout: fixed; width: 834px; border-collapse: separate; border-spacing: 0; }
th { height: 36px; padding: 0; border: solid #000; border-width: 1px 2px 1px 0; background: #b0ffff; font-weight: bold; line-height: 15px; }
th:first-child, td:first-child { border-left: 2px solid #000; }
th.cut { text-align: left; padding-left: 3px; }
tbody::before { content: ""; display: block; height: 3px; }
td { height: 33px; padding: 0 2px; border: solid #000; border-width: 2px 2px 0 0; }
.total td { border-bottom: 2px solid #000; height: 35px; }
.tool { display: block; width: 62px; height: 27px; padding-left: 2px; text-align: left; background: #54ceae; border: 2px solid; border-color: #a8f0dc #2c6c5c #2c6c5c #a8f0dc; }
.tool.current { background: #fec64c; }
.num { text-align: right; padding-right: 2px; }
td.w { background: #fff; }
td.c { background: #ffffcc; }
td input[type="text"] { height: 27px; padding: 0 0 8px 6px; border-color: #999 #ccc #ccc #999; }
td.w input[type="text"] { padding-left: 4px; }
td.w .beam::before { left: 5px; }
td.c input[type="text"] { border-color: #99997a #cccc99 #cccc99 #99997a; }
td.focus { padding: 0; box-shadow: inset 0 0 0 2px #000; }
td.focus span { display: block; padding: 0 2px; }
td .menu-select { height: 27px; margin-left: 4px; background: none; border-color: #d0d0a0 #99997a #99997a #d0d0a0; }
td .menu-select::after { border-color: #d0d0a0 #99997a #99997a #d0d0a0; }
.hscroll { display: flex; align-items: center; flex: none; height: 15px; margin: 4px 1px 5px; border: 2px solid; border-color: #2c6c5c #a8f0dc #a8f0dc #2c6c5c; background: #46ad92; }
.hscroll .thumb { flex: 1; height: 11px; background: #54ceae; border: 2px solid; border-color: #a8f0dc #2c6c5c #2c6c5c #a8f0dc; }
.hscroll .trough { width: 64px; }

.nav { display: flex; align-items: center; flex: none; height: 33px; border: solid #000; border-width: 1px 0; }
.nav > .cell { align-self: stretch; border-width: 0 1px; }
.nav .btn { padding: 1px 2px 0; }
.badge { width: 42px; padding-left: 4px; margin-right: 1px; background: #fec64c; font-size: 12px; }
.nav label { padding-left: 1px; white-space: nowrap; }
.nav .arrow { padding: 1px 0 0; font-size: 14px; }
.index { align-self: stretch; width: 60px; margin: 1px 3px 1px 4px; }
.index input[type="text"] { border-color: #2c6c5c #a8f0dc #a8f0dc #2c6c5c; }
.unit { width: 88px; padding: 2px 2px 2px 5px; }
.mode { width: 114px; padding: 2px 1px 2px 5px; }
.nav .menu-select { flex: 1; align-self: stretch; }
.merge { margin-top: 5px; }
.combine { width: 131px; }
.mtools { width: 362px; padding: 2px 2px 2px 10px; }
.nav.merge .menu-select { flex: none; width: 214px; margin-left: auto; }
.actions { display: flex; flex: none; height: 29px; }
.actions .cell { flex: 1; }
.actions .btn { padding-top: 1px; text-align: center; }

.net { position: absolute; right: 2px; top: 903px; width: 124px; height: 50px; }
.pill { position: absolute; inset: 7px 0 5px 24px; display: flex; align-items: center; justify-content: flex-end; border-radius: 19px; background: linear-gradient(#fff, #dce0e4); }
.rates { display: flex; flex-direction: column; width: 46px; margin-right: 5px; font: 10px/15px "Open Sans", sans-serif; color: #202020; }
.rates span { display: flex; justify-content: space-between; }
.rates .up { color: #e04040; }
.rates .down { color: #20a050; }
.ball { position: absolute; left: 0; top: 1px; width: 47px; height: 47px; border: 2px solid #e0ece4; border-radius: 50%; background: linear-gradient(#1c8458 28%, #44c854 30%, #50d058); box-shadow: 0 2px 4px #0008; color: #fff; text-align: center; font: 15px/42px "Open Sans", sans-serif; }
.tip { position: absolute; right: 78px; top: 973px; width: 128px; height: 30px; border: 1px solid #a8b0b4; background: #fff; color: #303030; text-align: center; font: 12px/28px "Noto Sans CJK SC", sans-serif; white-space: nowrap; }
.tip::after { content: ""; position: absolute; left: 8px; bottom: -5px; width: 8px; height: 8px; background: #fff; transform: rotate(45deg); }
.ime { position: absolute; right: 0; bottom: 0; }
</style>
